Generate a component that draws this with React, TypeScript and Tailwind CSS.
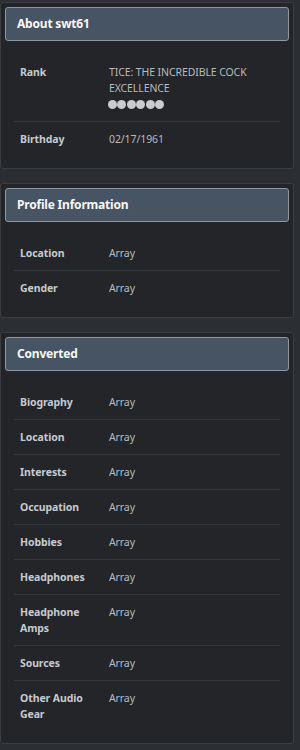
import React from "react";

type Row = { label: string; value: React.ReactNode };

const about: Row[] = [
  {
    label: "Rank",
    value: (
      <div>
        <div>TICE: THE INCREDIBLE COCK EXCELLENCE</div>
        <div className="-ml-[1px] flex h-[16px] items-center gap-[0.4px]">
          {[0, 1, 2, 3, 4, 5].map((i) => (
            <span key={i} className="inline-block h-[9px] w-[9px] rounded-full bg-[#c9cbcf]" />
          ))}
        </div>
      </div>
    ),
  },
  { label: "Birthday", value: "02/17/1961" },
];

const profile: Row[] = [
  { label: "Location", value: "Array" },
  { label: "Gender", value: "Array" },
];

const converted: Row[] = [
  "Biography",
  "Location",
  "Interests",
  "Occupation",
  "Hobbies",
  "Headphones",
  "Headphone Amps",
  "Sources",
  "Other Audio Gear",
].map((label) => ({ label, value: "Array" }));

function Panel({ title, rows }: { title: string; rows: Row[] }) {
  return (
    <section className="w-[294px] rounded-[3px] border border-[#3a3d42] bg-[#232529] p-[4px]">
      <h2 className="flex h-[34px] items-center rounded-[3px] border border-[#8e98a1] bg-[#465463] px-[11px] text-[12px] font-bold tracking-[-0.2px] text-[#f7f8f9]">
        {title}
      </h2>
      <dl className="px-[9px] pt-[14px] pb-[8px]">
        {rows.map((row, i) => (
          <div
            key={i}
            className={
              "flex px-[6px] py-[9px] text-[10.5px] leading-[16px] tracking-[-0.1px]" +
              (i > 0 ? " border-t border-[#35383d]" : "")
            }
          >
            <dt className="w-[89px] shrink-0 pr-[14px] font-bold text-[#c6cacf]">{row.label}</dt>
            <dd className="text-[#b6babf]">{row.value}</dd>
          </div>
        ))}
      </dl>
    </section>
  );
}

export default function App() {
  return (
    <div
      className="flex min-h-[750px] flex-col gap-[14px] bg-[#2b2e33] pt-[2px]"
      style={{ fontFamily: '"Noto Sans", "Open Sans", sans-serif' }}
    >
      <Panel title="About swt61" rows={about} />
      <Panel title="Profile Information" rows={profile} />
      <Panel title="Converted" rows={converted} />
    </div>
  );
}
